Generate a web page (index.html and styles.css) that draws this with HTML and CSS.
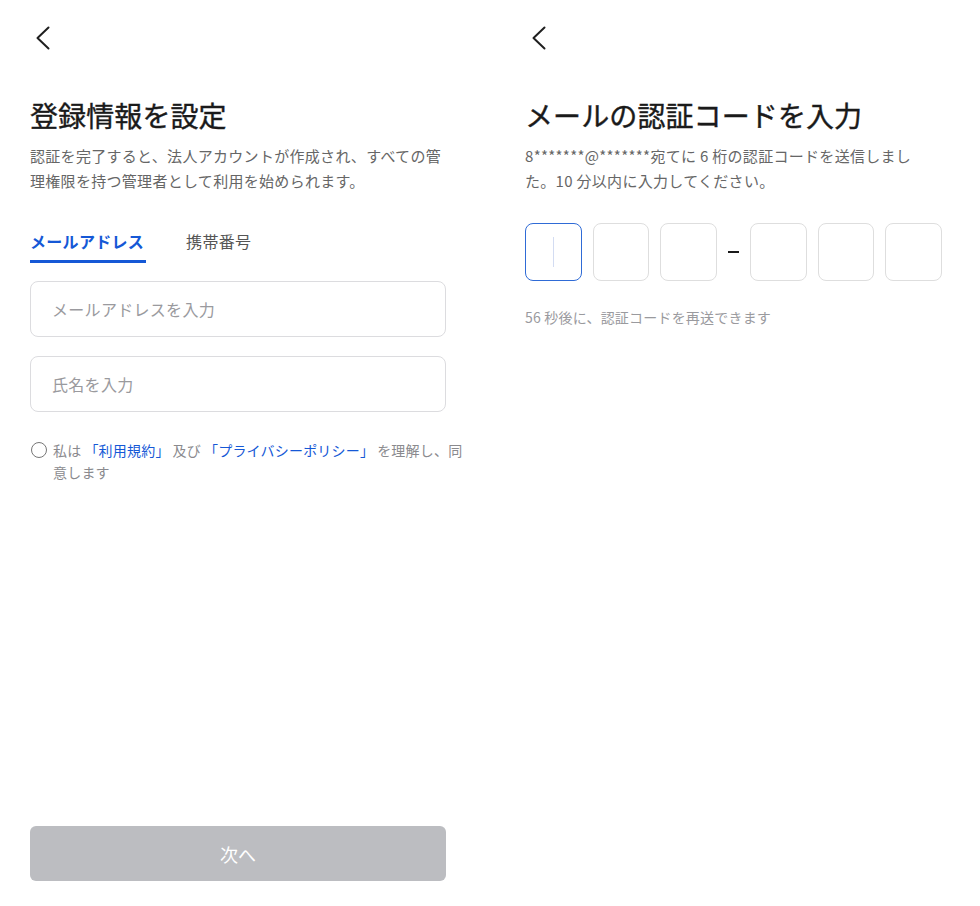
FILE: index.html
```html
<!DOCTYPE html>
<html lang="ja">
<head>
<meta charset="utf-8">
<link rel="stylesheet" href="styles.css">
</head>
<body>
<div class="page">
  <section class="panel panel-left">
    <div class="header">
      <svg class="back" width="16" height="24" viewBox="0 0 16 24"><polyline points="13.5,1.5 2.5,12 13.5,22.5" fill="none" stroke="#1f1f1f" stroke-width="2" stroke-linecap="round" stroke-linejoin="round"/></svg>
    </div>
    <h1 class="title">登録情報を設定</h1>
    <p class="desc">認証を完了すると、法人アカウントが作成され、すべての管理権限を持つ管理者として利用を始められます。</p>
    <div class="tabs">
      <div class="tab active">メールアドレス</div>
      <div class="tab">携帯番号</div>
    </div>
    <div class="field field-first">メールアドレスを入力</div>
    <div class="field field-second">氏名を入力</div>
    <div class="agree">
      <span class="radio"></span>
      <p class="agree-text">私は<span class="link">「利用規約」</span>及び<span class="link">「プライバシーポリシー」</span>を理解し、同意します</p>
    </div>
    <div class="button">次へ</div>
  </section>
  <section class="panel panel-right">
    <div class="header">
      <svg class="back" width="16" height="24" viewBox="0 0 16 24"><polyline points="13.5,1.5 2.5,12 13.5,22.5" fill="none" stroke="#1f1f1f" stroke-width="2" stroke-linecap="round" stroke-linejoin="round"/></svg>
    </div>
    <h1 class="title">メールの認証コードを入力</h1>
    <p class="desc desc-narrow">8*******@*******宛てに 6 桁の認証コードを送信しました。10 分以内に入力してください。</p>
    <div class="otp">
      <div class="box focus"><span class="cursor"></span></div>
      <div class="box"></div>
      <div class="box"></div>
      <div class="dash"></div>
      <div class="box"></div>
      <div class="box"></div>
      <div class="box"></div>
    </div>
    <p class="resend">56 秒後に、認証コードを再送できます</p>
  </section>
</div>
</body>
</html>
```

FILE: styles.css
```css
* { box-sizing: border-box; }
html, body { margin: 0; padding: 0; background: #fff; }
body {
  font-family: "Noto Sans CJK JP", "Noto Sans", "Liberation Sans", sans-serif;
  color: #1a1a1a;
}
.page {
  display: flex;
  gap: 78px;
  padding-left: 30px;
  height: 906px;
}
.panel {
  width: 417px;
  display: flex;
  flex-direction: column;
}
.header {
  height: 76px;
  display: flex;
  align-items: center;
}
.back { display: block; margin-left: 5px; }
.panel-right .back { margin-left: 6px; }
.title {
  margin: 19px 0 0;
  font-size: 28px;
  line-height: 40px;
  font-weight: 400;
  color: #1a1a1a;
  letter-spacing: 0.1px;
  -webkit-text-stroke: 0.4px #1a1a1a;
}
.desc {
  margin: 8px 0 0;
  font-size: 15px;
  line-height: 25px;
  color: #666;
  letter-spacing: 0.3px;
  width: 420px;
}
.desc-narrow { width: 400px; }
.tabs {
  margin-top: 36px;
  display: flex;
  gap: 40px;
}
.tab {
  font-size: 16px;
  line-height: 24px;
  padding-bottom: 7px;
  color: #555;
  border-bottom: 3px solid transparent;
  letter-spacing: 0.3px;
}
.tab.active {
  color: #1558d6;
  font-weight: 700;
  border-bottom-color: #1558d6;
  padding-right: 2px;
}
.field {
  height: 56px;
  width: 416px;
  border: 1px solid #dcdcdf;
  border-radius: 8px;
  padding-left: 21px;
  display: flex;
  align-items: center;
  font-size: 16px;
  color: #9a9a9e;
  letter-spacing: 0.3px;
}
.field-first { margin-top: 18px; }
.field-second { margin-top: 19px; }
.agree {
  margin-top: 27px;
  display: flex;
  align-items: flex-start;
  gap: 6px;
}
.radio {
  flex: none;
  width: 16px;
  height: 16px;
  border: 1.5px solid #777;
  border-radius: 50%;
  margin-top: 3px;
  margin-left: 1px;
}
.agree-text {
  flex: none;
  margin: 0;
  font-size: 14px;
  line-height: 22px;
  color: #8a8a8e;
  width: 418px;
  letter-spacing: 0.2px;
}
.link { color: #1558d6; padding: 0 3px; }
.button {
  margin-top: auto;
  margin-bottom: 25px;
  height: 55px;
  width: 416px;
  background: #bcbdc1;
  border-radius: 6px;
  color: #fff;
  font-size: 18px;
  display: flex;
  align-items: center;
  justify-content: center;
}
.otp {
  margin-top: 30px;
  display: flex;
  align-items: center;
  gap: 11px;
}
.box {
  width: 57px;
  height: 58px;
  border: 1.5px solid #dedede;
  border-radius: 8px;
  display: flex;
  align-items: center;
  justify-content: center;
}
.box.focus { border-color: #2f6bd6; }
.cursor {
  width: 1.5px;
  height: 30px;
  background: #d3dcf2;
}
.dash {
  width: 12px;
  height: 2px;
  background: #1a1a1a;
}
.resend {
  margin: 26px 0 0;
  font-size: 14px;
  line-height: 20px;
  color: #9a9a9e;
  letter-spacing: 0.2px;
}
```
